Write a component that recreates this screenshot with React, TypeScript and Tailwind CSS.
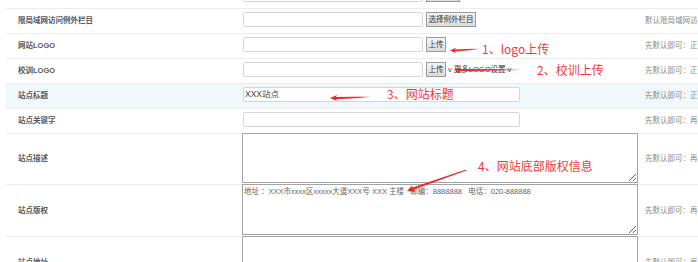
import React from "react";

const font = "font-['Liberation_Sans','Noto_Sans_CJK_SC',sans-serif]";

function Label({ children }: { children: React.ReactNode }) {
  return (
    <div className="w-[236px] shrink-0 pl-[12px] flex items-center text-[7.5px] text-[#5a5a5a] font-semibold">
      {children}
    </div>
  );
}

function Hint({ children }: { children: React.ReactNode }) {
  return (
    <div className="flex-1 pl-[7px] flex items-center text-[7.5px] text-[#888] whitespace-nowrap overflow-hidden">
      {children}
    </div>
  );
}

function TextBox({ wide, value }: { wide?: boolean; value?: string }) {
  return (
    <div
      className={`${wide ? "w-[277px]" : "w-[180px]"} h-[15px] ml-[1px] border border-[#d6d6d6] rounded-[2px] bg-white flex items-center px-[1px] text-[8.5px] text-[#444]`}
    >
      {value}
    </div>
  );
}

function Btn({ children, w }: { children: React.ReactNode; w: string }) {
  return (
    <div
      className={`${w} h-[15px] ml-[3px] border border-[#9a9a9a] bg-gradient-to-b from-[#f4f4f4] to-[#dcdcdc] flex items-center justify-center text-[7.5px] text-[#333]`}
    >
      {children}
    </div>
  );
}

function InputRow({
  label,
  hint,
  children,
  active,
}: {
  label: string;
  hint: string;
  children: React.ReactNode;
  active?: boolean;
}) {
  return (
    <div className={`h-[25px] flex border-t border-[#ececec] ${active ? "bg-[#f1f8fb]" : ""}`}>
      <Label>{label}</Label>
      <div className="w-[396px] shrink-0 flex items-start pt-[3px]">{children}</div>
      <Hint>{hint}</Hint>
    </div>
  );
}

function AreaRow({ label, hint, value, h }: { label: string; hint: string; value?: string; h: string }) {
  return (
    <div className={`${h} flex border-t border-[#ececec]`}>
      <Label>{label}</Label>
      <textarea
        readOnly
        value={value ?? ""}
        className="w-[396px] h-full -mt-[1px] shrink-0 border border-[#a3a3a3] bg-white px-[1px] text-[7.5px] leading-[13px] text-[#666] outline-none"
      />
      <Hint>{hint}</Hint>
    </div>
  );
}

export default function App() {
  return (
    <div className={`relative w-[698px] h-[262px] overflow-hidden bg-white ${font}`}>
      <div className="pl-[6px]">
        {/* top row, cut off */}
        <div className="h-[8px] flex overflow-hidden">
          <div className="w-[236px] shrink-0" />
          <div className="flex items-start -mt-[13px]">
            <TextBox />
            <Btn w="w-[34px]"> </Btn>
          </div>
        </div>

        <InputRow label="限局域网访问例外栏目" hint="默认限局域网访问">
          <TextBox />
          <Btn w="w-[50px]">选择例外栏目</Btn>
        </InputRow>

        <InputRow label="网站LOGO" hint="先默认即可：正常">
          <TextBox />
          <Btn w="w-[20px]">上传</Btn>
        </InputRow>

        <InputRow label="校训LOGO" hint="先默认即可：正常">
          <TextBox />
          <Btn w="w-[20px]">上传</Btn>
          <span className="ml-[2px] mt-[2px] text-[7.5px] text-[#444] whitespace-nowrap">
            v 更多LOGO设置 v
          </span>
        </InputRow>

        <InputRow label="站点标题" hint="先默认即可：正常" active>
          <TextBox wide value="XXX站点" />
        </InputRow>

        <InputRow label="站点关键字" hint="先默认即可：再">
          <TextBox wide />
        </InputRow>

        <AreaRow label="站点描述" hint="先默认即可：再" h="h-[51px]" />
        <AreaRow
          label="站点版权"
          hint="先默认即可：再"
          h="h-[52px]"
          value="地址 ：XXX市xxxx区xxxxx大道XXX号 XXX 主楼   邮编：8888888   电话：020-888888"
        />
        <AreaRow label="站点地址" hint="先默认即可：再" h="h-[52px]" />
      </div>

      {/* annotations */}
      <svg className="absolute left-0 top-0 pointer-events-none" width="698" height="262">
        <defs>
          <linearGradient id="fadeR" x1="0" x2="1" y1="0" y2="0">
            <stop offset="0" stopColor="#ee2b2b" />
            <stop offset="0.7" stopColor="#ee2b2b" />
            <stop offset="1" stopColor="#ee2b2b" stopOpacity="0.15" />
          </linearGradient>
        </defs>
        {/* 1 */}
        <path d="M450 50.5 L456 47.8 L455 49.6 L479 48.6 L479 49.4 L455 51.4 L456 53.2 Z" fill="url(#fadeR)" />
        {/* 2 */}
        <path d="M454 70 L461 67 L460 69 L520 69.4 L520 70.2 L460 71.2 L461 73 Z" fill="url(#fadeR)" />
        {/* 3 */}
        <path d="M330 98 L337 95 L336 97 L370 96.6 L370 97.4 L336 99.2 L337 101 Z" fill="url(#fadeR)" />
        {/* 4 */}
        <path d="M407 191 L412 185.5 L412.5 187.6 L466 169.6 L466.4 170.4 L414 189.4 L415 191.4 Z" fill="#ee2b2b" />
      </svg>
      <div className="absolute left-[482px] top-[41px] text-[12px] leading-[16px] text-[#f03a3a] font-['Noto_Sans_CJK_SC',sans-serif] whitespace-nowrap">
        1、logo上传
      </div>
      <div className="absolute left-[537px] top-[62px] text-[12px] leading-[16px] text-[#f03a3a] font-['Noto_Sans_CJK_SC',sans-serif] whitespace-nowrap">
        2、校训上传
      </div>
      <div className="absolute left-[387px] top-[86px] text-[12px] leading-[16px] text-[#f03a3a] font-['Noto_Sans_CJK_SC',sans-serif] whitespace-nowrap">
        3、网站标题
      </div>
      <div className="absolute left-[478px] top-[158px] text-[12px] leading-[16px] text-[#f03a3a] font-['Noto_Sans_CJK_SC',sans-serif] whitespace-nowrap">
        4、网站底部版权信息
      </div>
    </div>
  );
}
